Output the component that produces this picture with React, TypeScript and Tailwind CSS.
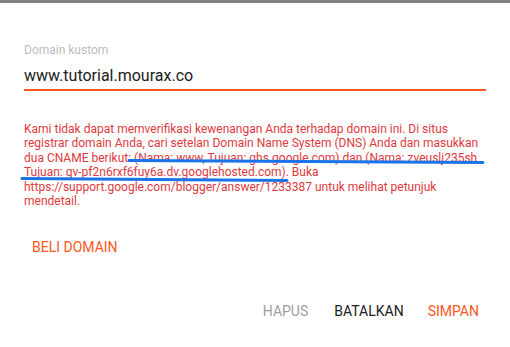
import React from "react";

const App: React.FC = () => {
  return (
    <div className="relative w-[510px] h-[347px] overflow-hidden bg-white font-['Roboto',sans-serif]">
      <div className="h-[3px] bg-[#808080]" />
      <div className="px-6 pt-[40px]">
        <div className="text-[12px] leading-[14px] text-[#bdbdbd]">Domain kustom</div>
        <div className="mt-[9px] pb-[3px] border-b-2 border-[#ff5722] text-[16px] leading-[20px] text-[#212121]">
          www.tutorial.mourax.co
        </div>
        <p className="mt-[31px] text-[12px] leading-[14.4px] text-[#e0393e]">
          Kami tidak dapat memverifikasi kewenangan Anda terhadap domain ini. Di situs registrar domain Anda, cari
          setelan Domain Name System (DNS) Anda dan masukkan dua CNAME berikut: (Nama: www, Tujuan: ghs.google.com)
          dan (Nama: zveuslj235sh, Tujuan: gv-pf2n6rxf6fuy6a.dv.googlehosted.com). Buka
          https://support.google.com/blogger/answer/1233387 untuk melihat petunjuk mendetail.
        </p>
      </div>
      <div className="mt-[27px] px-6">
        <button className="px-2 text-[14px] leading-[16px] text-[#ff5722]">BELI DOMAIN</button>
      </div>
      <div className="mt-[44px] flex justify-end pr-[31px] text-[14px] leading-[16px]">
        <button className="text-[#9e9e9e]">HAPUS</button>
        <button className="ml-[26px] text-[#212121]">BATALKAN</button>
        <button className="ml-[24px] text-[#ff5722]">SIMPAN</button>
      </div>
      <svg className="absolute inset-0 pointer-events-none" width="510" height="347">
        <path d="M129 160.5 L483 162.5" stroke="#1a73e8" strokeWidth="3" strokeLinecap="round" fill="none" />
        <path d="M22 178.5 L287 180.5" stroke="#1a73e8" strokeWidth="3" strokeLinecap="round" fill="none" />
      </svg>
    </div>
  );
};

export default App;
